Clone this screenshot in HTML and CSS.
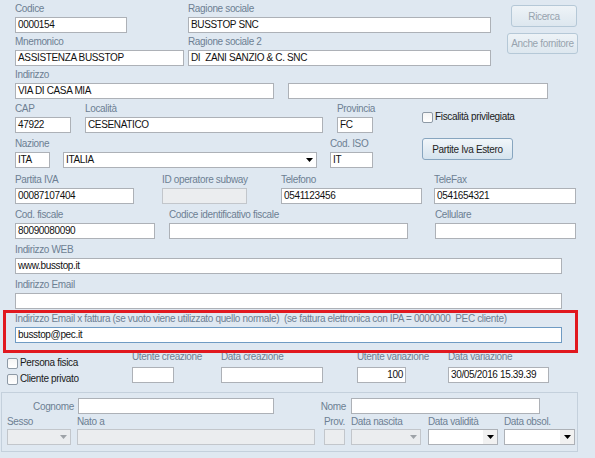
FILE: index.html
```html
<!DOCTYPE html>
<html lang="it">
<head>
<meta charset="utf-8">
<title>Anagrafica cliente</title>
<link rel="stylesheet" href="styles.css">
</head>
<body>
<div class="form">
  <div class="top">
    <div class="top-left">
      <div class="row">
        <div class="field f-codice"><div class="lbl">Codice</div><div class="inp">0000154</div></div>
        <div class="field f-rag"><div class="lbl">Ragione sociale</div><div class="inp">BUSSTOP SNC</div></div>
      </div>
      <div class="row r-gap3">
        <div class="field f-mnem"><div class="lbl">Mnemonico</div><div class="inp">ASSISTENZA BUSSTOP</div></div>
        <div class="field f-rag2"><div class="lbl">Ragione sociale 2</div><div class="inp">DI&nbsp; ZANI SANZIO &amp; C. SNC</div></div>
      </div>
    </div>
    <div class="top-btns">
      <div class="btn dis b-ric">Ricerca</div>
      <div class="btn dis b-anche">Anche fornitore</div>
    </div>
  </div>

  <div class="row r-gap3">
    <div class="field f-ind"><div class="lbl">Indirizzo</div><div class="inp">VIA DI CASA MIA</div></div>
    <div class="field f-ind2"><div class="inp"></div></div>
  </div>

  <div class="mid">
    <div class="mid-left">
      <div class="row">
        <div class="field f-cap"><div class="lbl">CAP</div><div class="inp">47922</div></div>
        <div class="field f-loc"><div class="lbl">Località</div><div class="inp">CESENATICO</div></div>
        <div class="field f-prov"><div class="lbl">Provincia</div><div class="inp">FC</div></div>
      </div>
      <div class="row r-gap5">
        <div class="field f-naz"><div class="lbl">Nazione</div><div class="inp">ITA</div></div>
        <div class="field f-italia"><div class="inp combo"><span class="val">ITALIA</span><span class="dd"><svg width="7" height="4" viewBox="0 0 7 4"><path d="M0 0H7L3.5 4Z"/></svg></span></div></div>
        <div class="field f-iso"><div class="lbl">Cod. ISO</div><div class="inp">IT</div></div>
      </div>
    </div>
    <div class="mid-right">
      <div class="chk chk-fisc"><span class="cb"></span><span class="ctext">Fiscalità privilegiata</span></div>
      <div class="btn b-piva">Partite Iva Estero</div>
    </div>
  </div>

  <div class="row r-gap6">
    <div class="field f-piva"><div class="lbl">Partita IVA</div><div class="inp">00087107404</div></div>
    <div class="field f-idop"><div class="lbl">ID operatore subway</div><div class="inp dis"></div></div>
    <div class="field f-tel"><div class="lbl">Telefono</div><div class="inp">0541123456</div></div>
    <div class="field f-fax"><div class="lbl">TeleFax</div><div class="inp">0541654321</div></div>
  </div>

  <div class="row r-gap5">
    <div class="field f-cf"><div class="lbl">Cod. fiscale</div><div class="inp">80090080090</div></div>
    <div class="field f-cid"><div class="lbl">Codice identificativo fiscale</div><div class="inp"></div></div>
    <div class="field f-cell"><div class="lbl">Cellulare</div><div class="inp"></div></div>
  </div>

  <div class="row r-gap5">
    <div class="field f-wide"><div class="lbl">Indirizzo WEB</div><div class="inp">www.busstop.it</div></div>
  </div>

  <div class="row r-gap5">
    <div class="field f-wide"><div class="lbl">Indirizzo Email</div><div class="inp"></div></div>
  </div>

  <div class="row r-gap4">
    <div class="field f-wide"><div class="lbl">Indirizzo Email x fattura (se vuoto viene utilizzato quello normale)&nbsp; (se fattura elettronica con IPA = 0000000&nbsp; PEC cliente)</div><div class="inp focus">busstop@pec.it</div></div>
  </div>

  <div class="row r11">
    <div class="checks">
      <div class="chk"><span class="cb"></span><span class="ctext">Persona fisica</span></div>
      <div class="chk"><span class="cb"></span><span class="ctext">Cliente privato</span></div>
    </div>
    <div class="field f-uc"><div class="lbl">Utente creazione</div><div class="inp"></div></div>
    <div class="field f-dc"><div class="lbl">Data creazione</div><div class="inp"></div></div>
    <div class="field f-uv"><div class="lbl">Utente variazione</div><div class="inp num">100</div></div>
    <div class="field f-dv"><div class="lbl">Data variazione</div><div class="inp">30/05/2016 15.39.39</div></div>
  </div>

  <div class="panel">
    <div class="prow">
      <div class="plbl plbl-cog">Cognome</div>
      <div class="inp f-cog"></div>
      <div class="plbl plbl-nome">Nome</div>
      <div class="inp f-nome"></div>
    </div>
    <div class="row prow2">
      <div class="field f-sesso"><div class="lbl">Sesso</div><div class="inp combo dis"><span class="val"></span><span class="dd"><svg width="7" height="4" viewBox="0 0 7 4"><path d="M0 0H7L3.5 4Z"/></svg></span></div></div>
      <div class="field f-nato"><div class="lbl">Nato a</div><div class="inp dis"></div></div>
      <div class="field f-pv"><div class="lbl">Prov.</div><div class="inp dis"></div></div>
      <div class="field f-dn"><div class="lbl">Data nascita</div><div class="inp combo dis"><span class="val"></span><span class="dd"><svg width="7" height="4" viewBox="0 0 7 4"><path d="M0 0H7L3.5 4Z"/></svg></span></div></div>
      <div class="field f-dval"><div class="lbl">Data validità</div><div class="inp combo"><span class="val"></span><span class="dd btnarea"><svg width="7" height="4" viewBox="0 0 7 4"><path d="M0 0H7L3.5 4Z"/></svg></span></div></div>
      <div class="field f-dobs"><div class="lbl">Data obsol.</div><div class="inp combo"><span class="val"></span><span class="dd btnarea"><svg width="7" height="4" viewBox="0 0 7 4"><path d="M0 0H7L3.5 4Z"/></svg></span></div></div>
    </div>
  </div>

  <div class="hl"></div>
</div>
</body>
</html>
```

FILE: styles.css
```css
body {
  margin: 0;
  background: #dfe8f1;
  font-family: "Liberation Sans", Arial, sans-serif;
  font-size: 10px;
  letter-spacing: -0.35px;
  color: #111;
}

.form {
  position: relative;
  width: 595px;
  height: 458px;
  overflow: hidden;
}

.row {
  display: flex;
  align-items: flex-end;
}

.r-gap3 { margin-top: 3px; }
.r-gap4 { margin-top: 4px; }
.r-gap5 { margin-top: 5px; }
.r-gap6 { margin-top: 6px; }

.field {
  display: flex;
  flex-direction: column;
  flex: none;
}

.lbl {
  height: 12px;
  line-height: 12px;
  margin-bottom: 2px;
  color: #6d7f93;
  white-space: nowrap;
}

.inp {
  height: 16px;
  box-sizing: border-box;
  border: 1px solid #adb1b7;
  background: #fff;
  line-height: 14px;
  padding: 0 2px;
  white-space: nowrap;
  overflow: hidden;
  flex: none;
}

.inp.dis {
  background: #ebedef;
  border-color: #c2c6cb;
}

.inp.focus {
  border-color: #6f9bc3;
}

.inp.num {
  text-align: right;
}

.combo {
  display: flex;
  padding-right: 0;
}

.combo .val {
  flex: 1;
}

.dd {
  width: 14px;
  display: flex;
  align-items: center;
  justify-content: center;
}

.dd svg path { fill: #000; }
.combo.dis .dd svg path { fill: #9ea3a8; }

.btnarea {
  background: #f1f1f1;
}

/* top block */
.top { display: flex; }
.top-left { padding-top: 3px; }

.f-codice { margin-left: 15px; width: 112px; }
.f-rag    { margin-left: 61px; width: 303px; }
.f-mnem   { margin-left: 15px; width: 169px; }
.f-rag2   { margin-left: 4px;  width: 303px; }

.top-btns {
  margin-left: 16px;
  width: 71px;
  display: flex;
  flex-direction: column;
  align-items: flex-end;
}

.btn {
  box-sizing: border-box;
  border: 1px solid #87a5bf;
  border-radius: 3px;
  background: linear-gradient(#f1f6fa, #d5e3ee);
  color: #1e1e1e;
  display: flex;
  align-items: center;
  justify-content: center;
  white-space: nowrap;
}

.btn.dis {
  border-color: #b5c8d7;
  background: linear-gradient(#eef3f7, #dde7ef);
  color: #97a3ae;
}

.b-ric   { margin-top: 5px; width: 66px; height: 22px; margin-right: 1px; }
.b-anche { margin-top: 6px; width: 71px; height: 21px; }

.f-ind  { margin-left: 15px; width: 259px; }
.f-ind2 { margin-left: 14px; width: 260px; }

/* middle block */
.mid { display: flex; margin-top: 4px; }

.f-cap    { margin-left: 15px; width: 56px; }
.f-loc    { margin-left: 14px; width: 238px; }
.f-prov   { margin-left: 14px; width: 36px; }
.f-naz    { margin-left: 15px; width: 35px; }
.f-italia { margin-left: 13px; width: 254px; }
.f-iso    { margin-left: 13px; width: 43px; }

.mid-right {
  margin-left: 49px;
  display: flex;
  flex-direction: column;
  align-items: flex-start;
}

.chk {
  display: flex;
  align-items: center;
  gap: 2px;
  height: 16px;
  white-space: nowrap;
}

.chk-fisc {
  height: 12px;
  margin-top: 8px;
}

.cb {
  width: 11px;
  height: 11px;
  box-sizing: border-box;
  border: 1px solid #8e9aa6;
  border-radius: 2px;
  background: linear-gradient(#f4f4f4, #ffffff);
  flex: none;
}

.ctext {
  color: #1a1a1a;
  line-height: 12px;
}

.b-piva { margin-top: 15px; width: 91px; height: 22px; }

.f-piva { margin-left: 15px; width: 119px; }
.f-idop { margin-left: 28px; width: 85px; }
.f-tel  { margin-left: 34px; width: 141px; }
.f-fax  { margin-left: 12px; width: 142px; }

.f-cf   { margin-left: 15px; width: 140px; }
.f-cid  { margin-left: 14px; width: 239px; }
.f-cell { margin-left: 27px; width: 141px; }

.f-wide { margin-left: 15px; width: 547px; }

/* creation / variation row */
.r11 {
  margin-top: 8px;
  align-items: flex-start;
}

.r11 .lbl { margin-bottom: 4px; }

.checks {
  margin-left: 7px;
  margin-top: 4px;
  width: 100px;
  display: flex;
  flex-direction: column;
  flex: none;
}

.f-uc { margin-left: 25px; width: 42px; }
.f-dc { margin-left: 47px; width: 102px; }
.f-uv { margin-left: 34px; width: 49px; }
.f-dv { margin-left: 42px; width: 101px; }

/* bottom group */
.panel {
  margin-top: 5px;
  margin-left: 1px;
  width: 577px;
  box-sizing: border-box;
  border: 1px solid #c4d0dc;
  padding: 5px 0 6px 0;
}

.prow {
  display: flex;
  align-items: center;
}

.plbl {
  color: #6d7f93;
  text-align: right;
  white-space: nowrap;
  flex: none;
}

.plbl-cog  { width: 72px; }
.f-cog     { margin-left: 4px; width: 196px; }
.plbl-nome { margin-left: 26px; width: 46px; }
.f-nome    { margin-left: 5px; width: 189px; }

.prow2 { margin-top: 2px; }
.prow2 .lbl { margin-bottom: 1px; }

.f-sesso { margin-left: 5px; width: 64px; }
.f-nato  { margin-left: 6px; width: 238px; }
.f-pv    { margin-left: 9px; width: 21px; }
.f-dn    { margin-left: 6px; width: 70px; }
.f-dval  { margin-left: 7px; width: 70px; }
.f-dobs  { margin-left: 6px; width: 71px; }

/* red annotation overlay */
.hl {
  position: absolute;
  left: 3px;
  top: 310px;
  width: 575px;
  height: 43px;
  box-sizing: border-box;
  border: 3px solid #e1181f;
  pointer-events: none;
}
```
